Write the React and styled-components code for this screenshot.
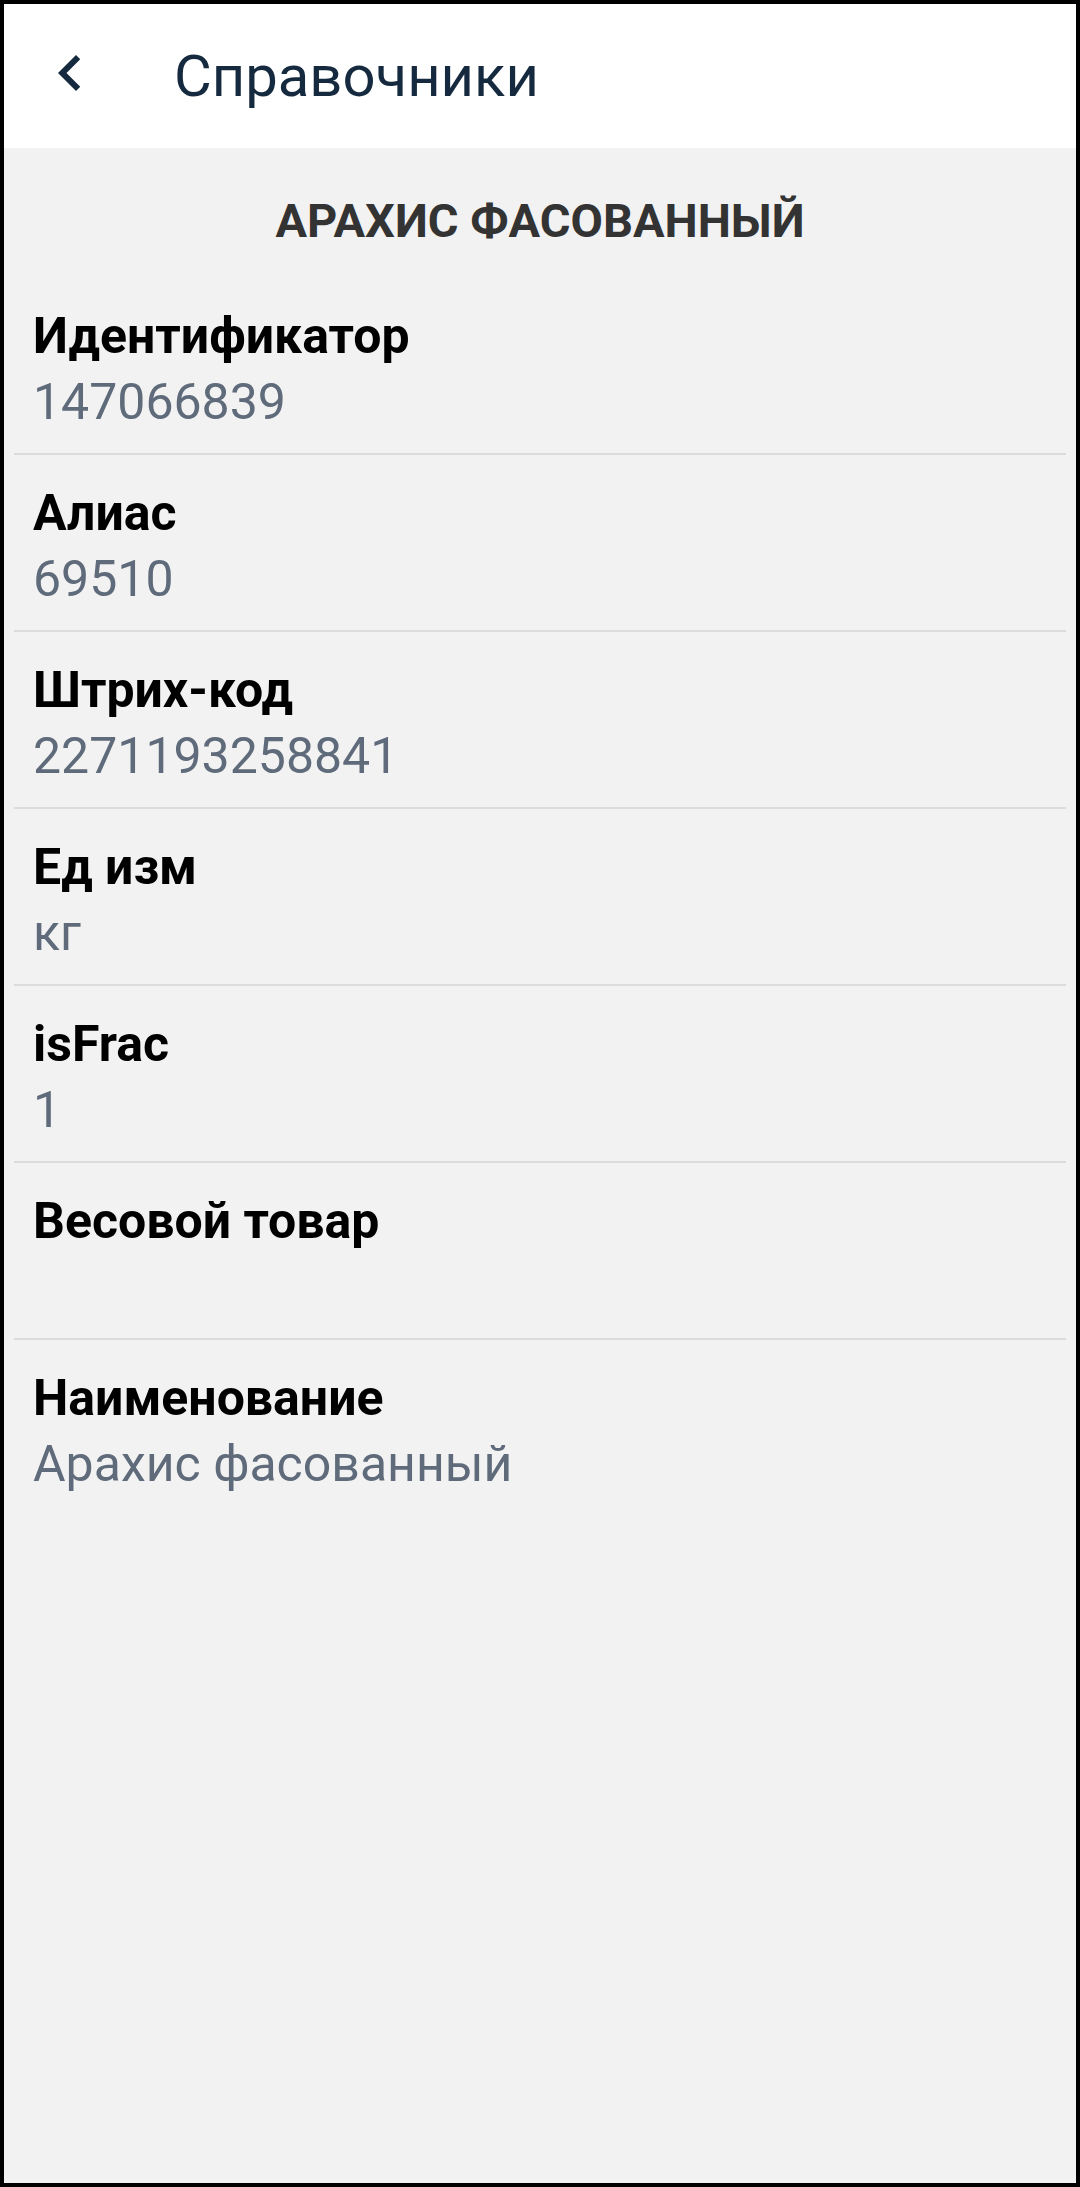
import styled, { createGlobalStyle } from 'styled-components'

const GlobalStyle = createGlobalStyle`
  html, body {
    margin: 0;
    padding: 0;
    background: #000;
  }
  body {
    font-family: Roboto, "Noto Sans", Arial, sans-serif;
  }
`

const Frame = styled.div`
  width: 1080px;
  min-height: 2187px;
  box-sizing: border-box;
  border: 4px solid #000;
  background: #f2f2f2;
  display: flex;
  flex-direction: column;
`

const Toolbar = styled.header`
  height: 144px;
  background: #ffffff;
  display: flex;
  align-items: center;
  flex-shrink: 0;
`

const BackButton = styled.button`
  width: 72px;
  height: 72px;
  margin-left: 30px;
  margin-top: -6px;
  padding: 0;
  border: none;
  background: none;
  display: flex;
  cursor: pointer;
  color: #152a3f;
`

const Title = styled.h1`
  margin: 0 0 0 68px;
  font-family: Roboto, sans-serif;
  font-size: 58px;
  font-weight: 400;
  line-height: 1;
  color: #152a3f;
`

const Heading = styled.h2`
  margin: 0;
  padding: 40px 0 24px;
  text-align: center;
  font-family: Roboto, sans-serif;
  font-size: 47px;
  font-weight: 700;
  line-height: 66px;
  color: #333333;
`

const List = styled.div`
  margin: 0 10px;
  display: flex;
  flex-direction: column;
`

const Row = styled.div`
  padding: 25px 19px 18px;

  & + & {
    border-top: 2px solid #dcdcdc;
  }
`

const Label = styled.div`
  font-family: Roboto, sans-serif;
  font-size: 50px;
  font-weight: 700;
  line-height: 66px;
  color: #000000;
`

const Value = styled.div`
  font-family: Roboto, sans-serif;
  font-size: 50px;
  font-weight: 400;
  line-height: 66px;
  min-height: 66px;
  color: #5f6b7a;
`

const fields = [
  { label: 'Идентификатор', value: '147066839' },
  { label: 'Алиас', value: '69510' },
  { label: 'Штрих-код', value: '2271193258841' },
  { label: 'Ед изм', value: 'кг' },
  { label: 'isFrac', value: '1' },
  { label: 'Весовой товар', value: '' },
  { label: 'Наименование', value: 'Арахис фасованный' },
]

const ChevronLeft = () => (
  <svg width="72" height="72" viewBox="0 0 24 24" fill="currentColor">
    <path d="M15.41 7.41L14 6l-6 6 6 6 1.41-1.41L10.83 12z" />
  </svg>
)

const App = () => {
  return (
    <>
      <GlobalStyle />
      <Frame>
        <Toolbar>
          <BackButton aria-label="Назад">
            <ChevronLeft />
          </BackButton>
          <Title>Справочники</Title>
        </Toolbar>
        <Heading>АРАХИС ФАСОВАННЫЙ</Heading>
        <List>
          {fields.map((f) => (
            <Row key={f.label}>
              <Label>{f.label}</Label>
              <Value>{f.value}</Value>
            </Row>
          ))}
        </List>
      </Frame>
    </>
  )
}

export default App
